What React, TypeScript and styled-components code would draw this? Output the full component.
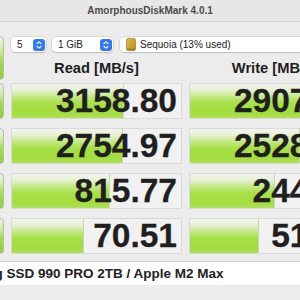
import React from "react";
import styled, { createGlobalStyle } from "styled-components";

const GlobalStyle = createGlobalStyle`
  html, body {
    margin: 0;
    padding: 0;
    background: #ececec;
  }
  body {
    font-family: "Liberation Sans", Arial, sans-serif;
  }
`;

interface Result {
  read: string;
  write: string;
}

const results: Result[] = [
  { read: "3158.80", write: "2907.62" },
  { read: "2754.97", write: "2528.41" },
  { read: "815.77", write: "244.36" },
  { read: "70.51", write: "51.18" }
];

// bar length grows with log10 of the value
const barWidth = (value: string) => 26.3 + 24.2 * Math.log10(parseFloat(value));

const WindowStyled = styled.div`
  width: 300px;
  height: 300px;
  overflow: hidden;
  background: #ececec;
  display: flex;
  flex-direction: column;
`;

const TitleBarStyled = styled.div`
  height: 22px;
  flex-shrink: 0;
  box-sizing: border-box;
  display: flex;
  align-items: center;
  justify-content: center;
  background: #e7e7e7;
  border-bottom: 1px solid #d3d3d3;
  font-size: 10px;
  font-weight: bold;
  color: #4c4c4c;
`;

const BodyStyled = styled.div`
  margin-left: -65px;
  padding-top: 14px;
  display: grid;
  grid-template-columns: 69px 171px 171px;
  column-gap: 7px;
  row-gap: 9px;
`;

const TopAreaStyled = styled.div`
  grid-column: 1 / 4;
  display: grid;
  grid-template-columns: 69px 171px 171px;
  column-gap: 7px;
  margin-bottom: -7px;
`;

const SideButtonStyled = styled.div<{ $tall?: boolean }>`
  height: ${(p) => (p.$tall ? "44px" : "36px")};
  box-sizing: border-box;
  border: 1px solid #b9b9b9;
  border-radius: 4px;
  background: linear-gradient(
    to bottom,
    #eef6e2 0%,
    #cdeca0 30%,
    #9fdb45 60%,
    #8fd236 100%
  );
`;

const TopRightStyled = styled.div`
  grid-column: 2 / 4;
  display: flex;
  flex-direction: column;
`;

const ControlsStyled = styled.div`
  display: flex;
  gap: 6px;
  height: 15px;
  margin-top: 1px;
`;

const SelectStyled = styled.div<{ $width?: number }>`
  ${(p) => (p.$width ? `width: ${p.$width}px;` : "flex: 1; margin-left: 1px;")}
  height: 15px;
  box-sizing: border-box;
  display: flex;
  align-items: center;
  gap: 4px;
  padding: 0 1px 0 6px;
  background: #ffffff;
  border-radius: 4px;
  box-shadow: 0 0 0 0.5px rgba(0, 0, 0, 0.16), 0 1px 1.5px rgba(0, 0, 0, 0.12);
  font-size: 10px;
  color: #222;
`;

const SelectLabelStyled = styled.span`
  flex: 1;
  white-space: nowrap;
`;

const HeaderRowStyled = styled.div`
  display: grid;
  grid-template-columns: 171px 171px;
  column-gap: 7px;
  height: 29px;
  align-items: center;
`;

const HeaderStyled = styled.div`
  text-align: center;
  font-size: 14.7px;
  font-weight: bold;
  color: #1e1e1e;
  padding-top: 2px;
`;

const CellStyled = styled.div`
  position: relative;
  height: 36px;
  box-sizing: border-box;
  border: 1px solid #d9d9d9;
  background: #f1f1f1;
  overflow: hidden;
`;

const BarStyled = styled.div`
  position: absolute;
  left: 0;
  top: 0;
  bottom: 0;
  border-right: 1px solid #c9d8b5;
  background: linear-gradient(
    to bottom,
    #f3f4f0 0%,
    #e6f1d4 18%,
    #c2e883 38%,
    #a8e048 56%,
    #a2dd3c 85%,
    #aee257 100%
  );
`;

const ValueStyled = styled.div`
  position: relative;
  text-align: right;
  padding-right: 4px;
  font-size: 33.5px;
  line-height: 34px;
  font-weight: bold;
  color: #1f1f1f;
  -webkit-text-stroke: 0.3px #1f1f1f;
`;

const CommentStyled = styled.div`
  grid-column: 1 / 4;
  margin-top: -2px;
  height: 23px;
  display: flex;
  align-items: center;
  padding-left: 7px;
  background: #ffffff;
  border-top: 1px solid #d4d4d4;
  font-size: 13.5px;
  font-weight: bold;
  color: #222;
  white-space: nowrap;
`;

const Stepper = () => (
  <svg width="12" height="12" viewBox="0 0 12 12">
    <rect width="12" height="12" rx="3" fill="#3479f4" />
    <path
      d="M4 4.6 L6 2.8 L8 4.6 M4 7.4 L6 9.2 L8 7.4"
      fill="none"
      stroke="#ffffff"
      strokeWidth="1.1"
      strokeLinecap="round"
      strokeLinejoin="round"
    />
  </svg>
);

const DiskIcon = () => (
  <svg width="10" height="13" viewBox="0 0 10 13">
    <defs>
      <linearGradient id="disk" x1="0" y1="0" x2="1" y2="1">
        <stop offset="0" stopColor="#e3bd4c" />
        <stop offset="1" stopColor="#b88d1e" />
      </linearGradient>
    </defs>
    <rect x="0.5" y="0.5" width="9" height="12" rx="1.6" fill="url(#disk)" stroke="#8f6d16" strokeWidth="0.6" />
    <rect x="1.2" y="10.4" width="7.6" height="1.4" rx="0.5" fill="#8f6d16" opacity="0.6" />
  </svg>
);

const App = () => (
  <WindowStyled>
    <GlobalStyle />
    <TitleBarStyled>AmorphousDiskMark 4.0.1</TitleBarStyled>
    <BodyStyled>
      <TopAreaStyled>
        <SideButtonStyled $tall />
        <TopRightStyled>
          <ControlsStyled>
            <SelectStyled $width={35}>
              <SelectLabelStyled>5</SelectLabelStyled>
              <Stepper />
            </SelectStyled>
            <SelectStyled $width={61}>
              <SelectLabelStyled>1 GiB</SelectLabelStyled>
              <Stepper />
            </SelectStyled>
            <SelectStyled>
              <DiskIcon />
              <SelectLabelStyled>Sequoia (13% used)</SelectLabelStyled>
              <Stepper />
            </SelectStyled>
          </ControlsStyled>
          <HeaderRowStyled>
            <HeaderStyled>Read [MB/s]</HeaderStyled>
            <HeaderStyled>Write [MB/s]</HeaderStyled>
          </HeaderRowStyled>
        </TopRightStyled>
      </TopAreaStyled>
      {results.map((r) => (
        <React.Fragment key={r.read}>
          <SideButtonStyled />
          <CellStyled>
            <BarStyled style={{ width: barWidth(r.read) }} />
            <ValueStyled>{r.read}</ValueStyled>
          </CellStyled>
          <CellStyled>
            <BarStyled style={{ width: barWidth(r.write) }} />
            <ValueStyled>{r.write}</ValueStyled>
          </CellStyled>
        </React.Fragment>
      ))}
      <CommentStyled>Samsung SSD 990 PRO 2TB / Apple M2 Max</CommentStyled>
    </BodyStyled>
  </WindowStyled>
);

export default App;
